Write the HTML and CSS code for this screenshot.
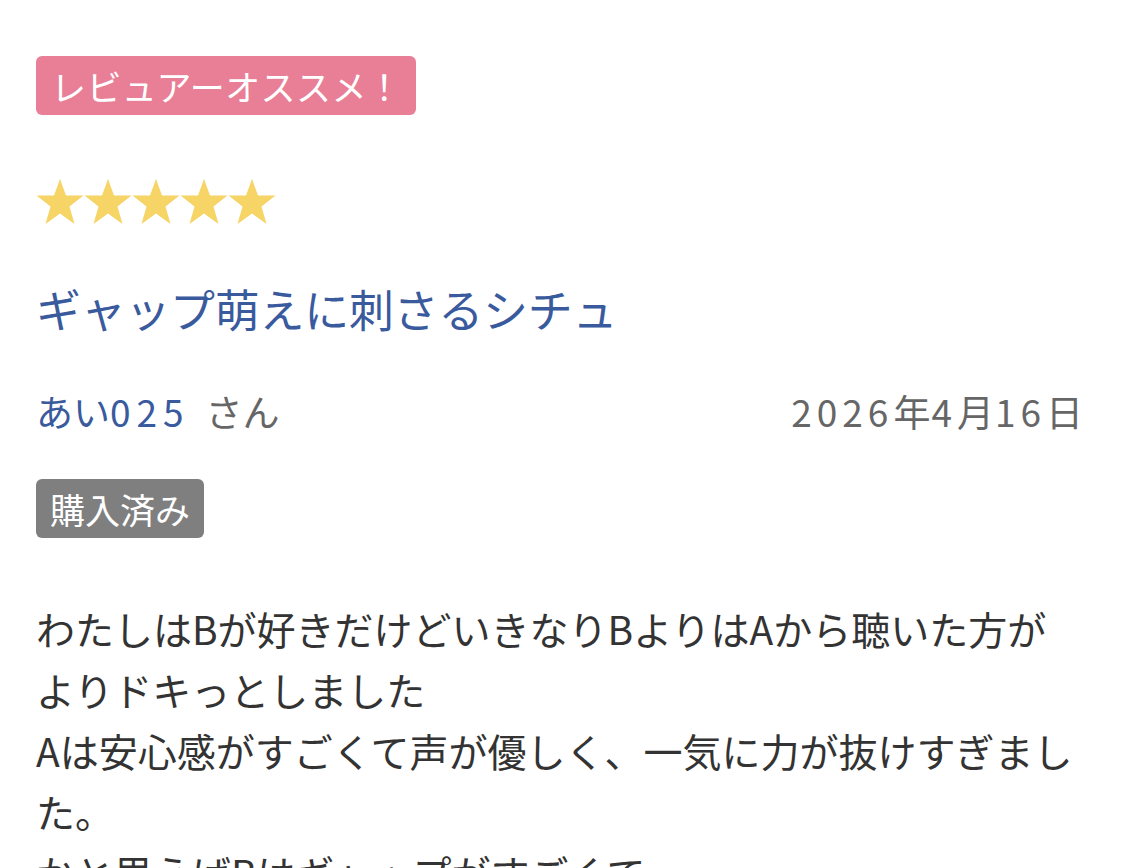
FILE: index.html
```html
<!DOCTYPE html>
<html lang="ja">
<head>
<meta charset="utf-8"/>
<meta content="width=device-width, initial-scale=1.0" name="viewport"/>
<title>レビュー</title>
<link rel="stylesheet" href="styles.css">
</head>
<body>
<div class="review">
  <div class="review-head">
    <span class="tag tag-recommend">レビュアーオススメ！</span>
  </div>

  <div class="stars">
    <svg viewBox="0 0 240 48" width="240" height="48">
      <defs>
        <polygon id="star" points="24,1 30,17.5 47.5,17.5 33.5,28.5 38.5,46 24,35.5 9.5,46 14.5,28.5 0.5,17.5 18,17.5"></polygon>
      </defs>
      <use href="#star" x="0"></use>
      <use href="#star" x="48"></use>
      <use href="#star" x="96"></use>
      <use href="#star" x="144"></use>
      <use href="#star" x="192"></use>
    </svg>
  </div>

  <h2 class="review-title">ギャップ萌えに刺さるシチュ</h2>

  <div class="reviewer-row">
    <div class="reviewer"><a class="reviewer-name" href="#">あい<span class="num">025</span></a><span class="honorific">さん</span></div>
    <div class="review-date"><span class="num">2026</span>年<span class="num">4</span>月<span class="num">16</span>日</div>
  </div>

  <div class="purchased">
    <span class="tag tag-bought">購入済み</span>
  </div>

  <div class="review-body">
    わたしはBが好きだけどいきなりBよりはAから聴いた方がよりドキっとしました<br>
    Aは安心感がすごくて声が優しく、一気に力が抜けすぎました。<br>
    かと思えばBはギャップがすごくて
  </div>
</div>
</body>
</html>
```

FILE: styles.css
```css
body {
  margin: 0;
  background: #fff;
  font-family: "Noto Sans CJK JP", "Noto Sans", sans-serif;
  color: #333;
}

html, body {
  height: 100%;
  overflow: hidden;
}

.review {
  padding: 56px 36px 0 36px;
}

.tag {
  display: inline-block;
  color: #fff;
  border-radius: 6px;
  font-size: 34px;
  line-height: 59px;
  padding: 0 15px;
}

.tag-recommend {
  background: #e87f96;
  font-size: 35px;
  letter-spacing: 0.4px;
  padding: 0 14px 0 15px;
}

.tag-bought {
  background: #7f7f7f;
  font-size: 35px;
  padding: 0 14px;
}

.review-head {
  display: flex;
}

.stars {
  margin-top: 63px;
  display: flex;
}

.stars svg {
  fill: #f6d465;
}

.review-title {
  margin: 52px 0 0 0;
  font-size: 45px;
  font-weight: normal;
  line-height: 62px;
  color: #3a5a9e;
  letter-spacing: -0.3px;
}

.reviewer-row {
  margin-top: 46px;
  display: flex;
  justify-content: space-between;
  align-items: center;
  font-size: 37px;
  line-height: 50px;
  color: #666;
}

.reviewer-name {
  color: #3a5a9e;
  text-decoration: none;
}

.num {
  letter-spacing: 5px;
}

.reviewer-name .num {
  letter-spacing: 6px;
}

.honorific {
  margin-left: 16px;
}

.review-date {
  color: #666;
  padding-right: 5px;
  letter-spacing: 1px;
}

.purchased {
  margin-top: 43px;
  display: flex;
}

.review-body {
  margin-top: 60px;
  font-size: 39px;
  line-height: 61px;
  color: #333;
  padding-right: 10px;
}
```
